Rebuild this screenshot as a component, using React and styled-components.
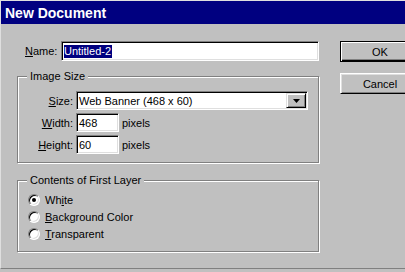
import React from "react";
import styled, { createGlobalStyle } from "styled-components";

const Global = createGlobalStyle`
  html, body { margin: 0; padding: 0; background: #c0c0c0; overflow: hidden; }
  body {
    font-family: "Liberation Sans", Arial, sans-serif;
    font-size: 11px;
    color: #000;
  }
  * { box-sizing: border-box; }
`;

const Window = styled.div`
  width: 405px;
  height: 269px;
  overflow: hidden;
  border-top: 1px solid #dfdfdf;
  border-left: 1px solid #dfdfdf;
  border-bottom: 1px solid #808080;
  box-shadow: 0 1px 0 #000;
  display: flex;
  flex-direction: column;
  background: #c0c0c0;
`;

const TitleBar = styled.div`
  height: 23px;
  flex: none;
  background: #000080;
  color: #fff;
  font-weight: bold;
  font-size: 14px;
  display: flex;
  align-items: center;
  padding-left: 4px;
`;

const Body = styled.div`
  display: flex;
  gap: 20px;
  padding: 17px 0 0 16px;
`;

const Main = styled.div`
  width: 303px;
  flex: none;
  display: flex;
  flex-direction: column;
`;

const NameRow = styled.div`
  display: flex;
  align-items: center;
  height: 20px;
  padding-left: 8px;
`;

const NameLabel = styled.span`
  width: 36px;
`;

const Field = styled.div`
  width: ${(p) => p.$w}px;
  height: ${(p) => p.$h}px;
  background: #fff;
  border: 1px solid;
  border-color: #808080 #fff #fff #808080;
  box-shadow: inset 1px 1px 0 #000, inset -1px -1px 0 #dfdfdf;
  display: flex;
  align-items: center;
  justify-content: space-between;
  padding: 0 1px 0 2px;
  white-space: nowrap;
`;

const Selected = styled.span`
  background: #000080;
  color: #fff;
  line-height: 13px;
  padding: 0 1px 0 0;
`;

const Group = styled.fieldset`
  width: 302px;
  margin: ${(p) => p.$mt}px 0 0 0;
  padding: 0;
  border: 1px solid #808080;
  box-shadow: 1px 1px 0 #fff, inset 1px 1px 0 #fff;
  min-inline-size: 0;
`;

const Legend = styled.legend`
  margin-left: 9px;
  padding: 0 3px;
  line-height: 13px;
  background: #c0c0c0;
`;

const SizeGrid = styled.div`
  display: grid;
  grid-template-columns: 55px auto;
  grid-auto-rows: 19px;
  column-gap: 3px;
  row-gap: 3px;
  align-items: center;
  padding: 8px 0 8px 0;
`;

const Label = styled.span`
  text-align: right;
`;

const Cell = styled.div`
  display: flex;
  align-items: center;
  gap: 3px;
`;

const DropButton = styled.div`
  width: 20px;
  height: 15px;
  background: #c0c0c0;
  border: 1px solid;
  border-color: #dfdfdf #000 #000 #dfdfdf;
  box-shadow: inset 1px 1px 0 #fff, inset -1px -1px 0 #808080;
  display: flex;
  align-items: center;
  justify-content: center;
`;

const RadioList = styled.div`
  display: flex;
  flex-direction: column;
  padding: 4px 0 9px 10px;
`;

const RadioRow = styled.div`
  display: flex;
  align-items: center;
  gap: 5px;
  height: 17px;
`;

const Radio = styled.span`
  width: 12px;
  height: 12px;
  border-radius: 50%;
  background: #fff;
  border: 1px solid;
  border-color: #808080 #fff #fff #808080;
  box-shadow: inset 1px 1px 0 #000, inset -1px -1px 0 #dfdfdf;
  display: flex;
  align-items: center;
  justify-content: center;
  &::after {
    content: "";
    width: 4px;
    height: 4px;
    border-radius: 50%;
    background: ${(p) => (p.$checked ? "#000" : "transparent")};
  }
`;

const Side = styled.div`
  display: flex;
  flex-direction: column;
  gap: 11px;
  flex: none;
`;

const Button = styled.div`
  width: 80px;
  height: 21px;
  background: #c0c0c0;
  display: flex;
  align-items: center;
  justify-content: center;
  border: 1px solid;
  ${(p) =>
    p.$default
      ? `border-color: #000;
         box-shadow: inset 1px 1px 0 #fff, inset -1px -1px 0 #000, inset -2px -2px 0 #808080;`
      : `border-color: #fff #000 #000 #fff;
         box-shadow: inset 1px 1px 0 #dfdfdf, inset -1px -1px 0 #808080;`}
`;

export default function App() {
  return (
    <>
      <Global />
      <Window>
        <TitleBar>New Document</TitleBar>
        <Body>
          <Main>
            <NameRow>
              <NameLabel>
                <u>N</u>ame:
              </NameLabel>
              <Field $w={258} $h={20}>
                <Selected>Untitled-2</Selected>
                <span />
              </Field>
            </NameRow>

            <Group $mt={9}>
              <Legend>Image Size</Legend>
              <SizeGrid>
                <Label>
                  <u>S</u>ize:
                </Label>
                <Cell>
                  <Field $w={232} $h={19}>
                    <span>Web Banner (468 x 60)</span>
                    <DropButton>
                      <svg width="7" height="4" viewBox="0 0 7 4">
                        <path d="M0 0h7L3.5 4z" fill="#000" />
                      </svg>
                    </DropButton>
                  </Field>
                </Cell>
                <Label>
                  <u>W</u>idth:
                </Label>
                <Cell>
                  <Field $w={43} $h={19}>
                    <span>468</span>
                  </Field>
                  <span>pixels</span>
                </Cell>
                <Label>
                  <u>H</u>eight:
                </Label>
                <Cell>
                  <Field $w={43} $h={19}>
                    <span>60</span>
                  </Field>
                  <span>pixels</span>
                </Cell>
              </SizeGrid>
            </Group>

            <Group $mt={11}>
              <Legend>Contents of First Layer</Legend>
              <RadioList>
                <RadioRow>
                  <Radio $checked />
                  <span>
                    Wh<u>i</u>te
                  </span>
                </RadioRow>
                <RadioRow>
                  <Radio />
                  <span>
                    <u>B</u>ackground Color
                  </span>
                </RadioRow>
                <RadioRow>
                  <Radio />
                  <span>
                    <u>T</u>ransparent
                  </span>
                </RadioRow>
              </RadioList>
            </Group>
          </Main>

          <Side>
            <Button $default>OK</Button>
            <Button>Cancel</Button>
          </Side>
        </Body>
      </Window>
    </>
  );
}
